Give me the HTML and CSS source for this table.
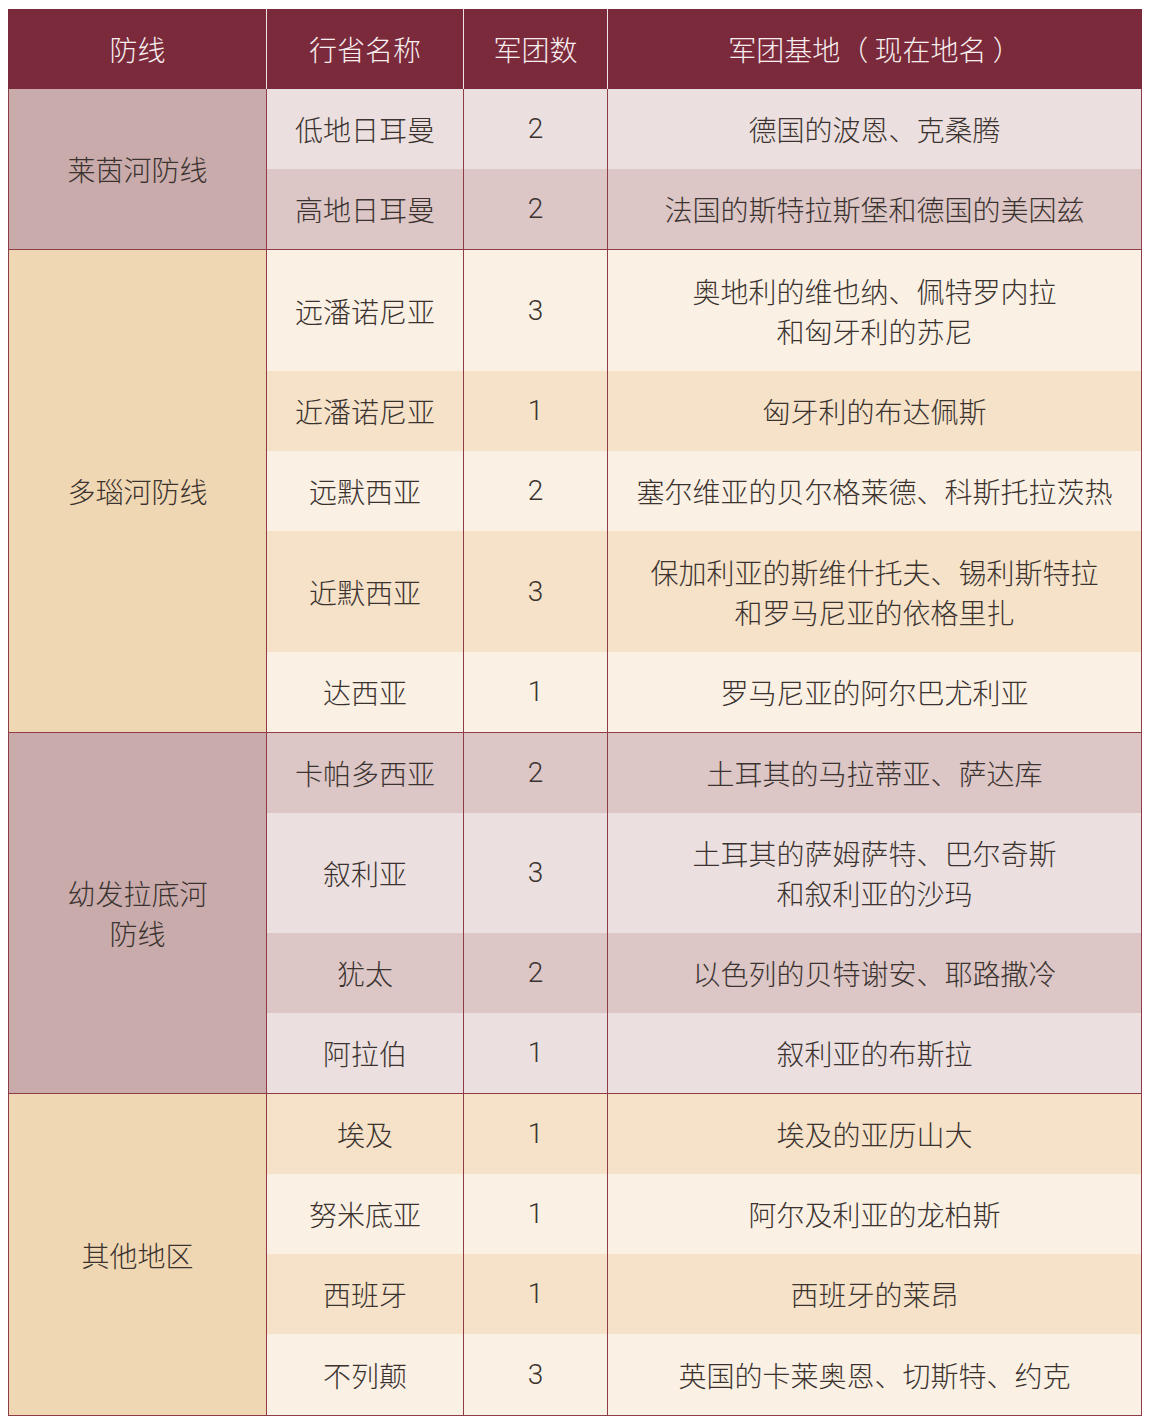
FILE: index.html
```html
<!DOCTYPE html>
<html lang="zh-CN">
<head>
<meta charset="utf-8">
<title>防线</title>
<link rel="stylesheet" href="styles.css">
</head>
<body>
<table class="legions">
  <colgroup>
    <col class="c1"><col class="c2"><col class="c3"><col class="c4">
  </colgroup>
  <thead>
    <tr><th>防线</th><th>行省名称</th><th>军团数</th><th>军团基地（ 现在地名 ）</th></tr>
  </thead>
  <tbody>
    <tr class="start rose light"><td class="grp rose-g" rowspan="2">莱茵河防线</td><td>低地日耳曼</td><td class="num">2</td><td>德国的波恩、克桑腾</td></tr>
    <tr class="rose dark"><td>高地日耳曼</td><td class="num">2</td><td>法国的斯特拉斯堡和德国的美因兹</td></tr>

    <tr class="start sand light tall"><td class="grp sand-g" rowspan="5">多瑙河防线</td><td>远潘诺尼亚</td><td class="num">3</td><td>奥地利的维也纳、佩特罗内拉<br>和匈牙利的苏尼</td></tr>
    <tr class="sand dark"><td>近潘诺尼亚</td><td class="num">1</td><td>匈牙利的布达佩斯</td></tr>
    <tr class="sand light"><td>远默西亚</td><td class="num">2</td><td>塞尔维亚的贝尔格莱德、科斯托拉茨热</td></tr>
    <tr class="sand dark tall"><td>近默西亚</td><td class="num">3</td><td>保加利亚的斯维什托夫、锡利斯特拉<br>和罗马尼亚的依格里扎</td></tr>
    <tr class="sand light"><td>达西亚</td><td class="num">1</td><td>罗马尼亚的阿尔巴尤利亚</td></tr>

    <tr class="start rose dark"><td class="grp rose-g" rowspan="4">幼发拉底河<br>防线</td><td>卡帕多西亚</td><td class="num">2</td><td>土耳其的马拉蒂亚、萨达库</td></tr>
    <tr class="rose light tall2"><td>叙利亚</td><td class="num">3</td><td>土耳其的萨姆萨特、巴尔奇斯<br>和叙利亚的沙玛</td></tr>
    <tr class="rose dark"><td>犹太</td><td class="num">2</td><td>以色列的贝特谢安、耶路撒冷</td></tr>
    <tr class="rose light"><td>阿拉伯</td><td class="num">1</td><td>叙利亚的布斯拉</td></tr>

    <tr class="start sand dark"><td class="grp sand-g" rowspan="4">其他地区</td><td>埃及</td><td class="num">1</td><td>埃及的亚历山大</td></tr>
    <tr class="sand light"><td>努米底亚</td><td class="num">1</td><td>阿尔及利亚的龙柏斯</td></tr>
    <tr class="sand dark"><td>西班牙</td><td class="num">1</td><td>西班牙的莱昂</td></tr>
    <tr class="sand light last"><td>不列颠</td><td class="num">3</td><td>英国的卡莱奥恩、切斯特、约克</td></tr>
  </tbody>
</table>
</body>
</html>
```

FILE: styles.css
```css
html, body {
  margin: 0;
  padding: 0;
  background: #ffffff;
}
body {
  padding: 9px 0 0 8px;
  font-family: "Noto Sans CJK SC", "Noto Sans", sans-serif;
  font-weight: 300;
  color: #3b3330;
}
.legions {
  border-collapse: collapse;
  table-layout: fixed;
  width: 1133px;
  font-size: 28px;
  line-height: 40px;
}
.c1 { width: 258px; }
.c2 { width: 197px; }
.c3 { width: 144px; }
.c4 { width: 534px; }

.legions th {
  background: #7b2a3b;
  color: #f7eef0;
  font-weight: 300;
  height: 80px;
  padding: 0;
  text-align: center;
  vertical-align: middle;
  border-left: 1px solid #f2e4e6;
}
.legions th:first-child { border-left: 1px solid #7b2a3b; }
.legions th:last-child { border-right: 1px solid #7b2a3b; }

.legions td {
  height: 80px;
  padding: 0;
  text-align: center;
  vertical-align: middle;
  border-left: 1px solid #8e3d48;
  border-right: 1px solid #8e3d48;
}
.legions tr.tall td { height: 121px; }
.legions tr.tall2 td { height: 120px; }
.legions tr.last td { height: 81px; }
.legions tr.start td { border-top: 1px solid #8e3d48; }
.legions tr.last td,
.legions td.grp { border-bottom: 1px solid #8e3d48; }
.legions tbody tr:first-child td { border-top: none; }
.legions td.grp { height: auto; }

.rose.light td { background: #ebe0df; }
.rose.dark td { background: #dcc6c6; }
.sand.light td { background: #faf0e3; }
.sand.dark td { background: #f5e2c8; }
.legions td.rose-g { background: #c9abab; }
.legions td.sand-g { background: #f0d7b3; }
.num { font-family: "Roboto", "Noto Sans CJK SC", sans-serif; font-weight: 300; }
```
